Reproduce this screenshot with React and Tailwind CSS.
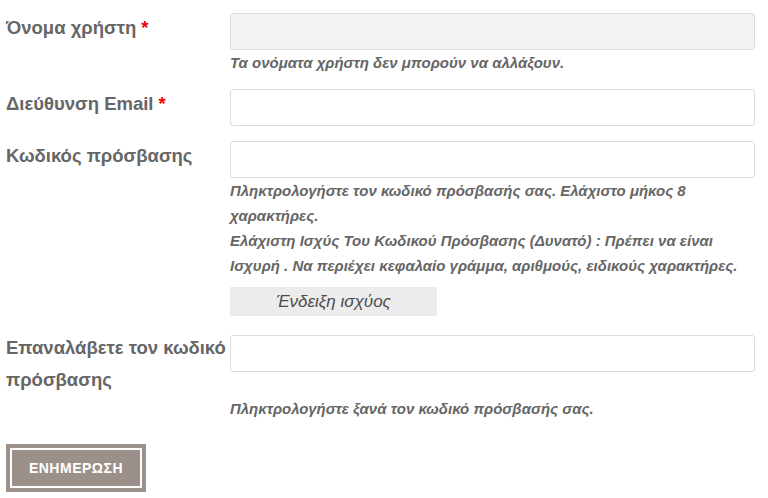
import React from 'react';

const font = { fontFamily: '"Liberation Sans", Arial, sans-serif' };

const Label = ({ children, required }) => (
  <div className="w-[224px] shrink-0 text-[18.5px] font-bold leading-[32px] text-[#666]">
    {children}
    {required && <span className="text-[#e00] ml-[5px]">*</span>}
  </div>
);

const Input = ({ disabled }) => (
  <input
    type="text"
    disabled={disabled}
    className={`block w-[525px] h-[37px] rounded-[3px] border border-[#dcdcdc] mt-px ${disabled ? 'bg-[#f3f3f3]' : 'bg-white'}`}
  />
);

const Help = ({ children }) => (
  <p className="text-[15px] font-bold italic leading-[25px] text-[#666]">{children}</p>
);

export default function App() {
  return (
    <div className="w-[768px] h-[498px] bg-white pl-[6px] pt-[12px]" style={font}>
      <div className="flex">
        <Label required>Όνομα χρήστη</Label>
        <div>
          <Input disabled />
          <Help>Τα ονόματα χρήστη δεν μπορούν να αλλάξουν.</Help>
        </div>
      </div>

      <div className="flex mt-[13px]">
        <Label required>Διεύθυνση Email</Label>
        <Input />
      </div>

      <div className="flex mt-[14px]">
        <Label>Κωδικός πρόσβασης</Label>
        <div>
          <Input />
          <div className="w-[525px]">
            <Help>
              Πληκτρολογήστε τον κωδικό πρόσβασής σας. Ελάχιστο μήκος 8 χαρακτήρες.
              <br />
              Ελάχιστη Ισχύς Του Κωδικού Πρόσβασης (Δυνατό) : Πρέπει να είναι Ισχυρή . Να περιέχει κεφαλαίο γράμμα, αριθμούς, ειδικούς χαρακτήρες.
            </Help>
          </div>
          <div className="mt-[9px] w-[207px] h-[29px] bg-[#ececec] flex items-center justify-center text-[17px] italic text-[#4a4a4a]">
            Ένδειξη ισχύος
          </div>
        </div>
      </div>

      <div className="flex mt-[16px]">
        <Label>Επαναλάβετε τον κωδικό πρόσβασης</Label>
        <div className="pt-[2px]">
          <Input />
        </div>
      </div>
      <div className="pl-[224px]">
        <Help>Πληκτρολογήστε ξανά τον κωδικό πρόσβασής σας.</Help>
      </div>

      <button className="mt-[23px] w-[140px] h-[48px] bg-[#9b918a] p-[4px] block">
        <span className="flex h-full items-center justify-center border-2 border-white text-white text-[14px] font-bold tracking-[0.5px]">
          ΕΝΗΜΕΡΩΣΗ
        </span>
      </button>
    </div>
  );
}
